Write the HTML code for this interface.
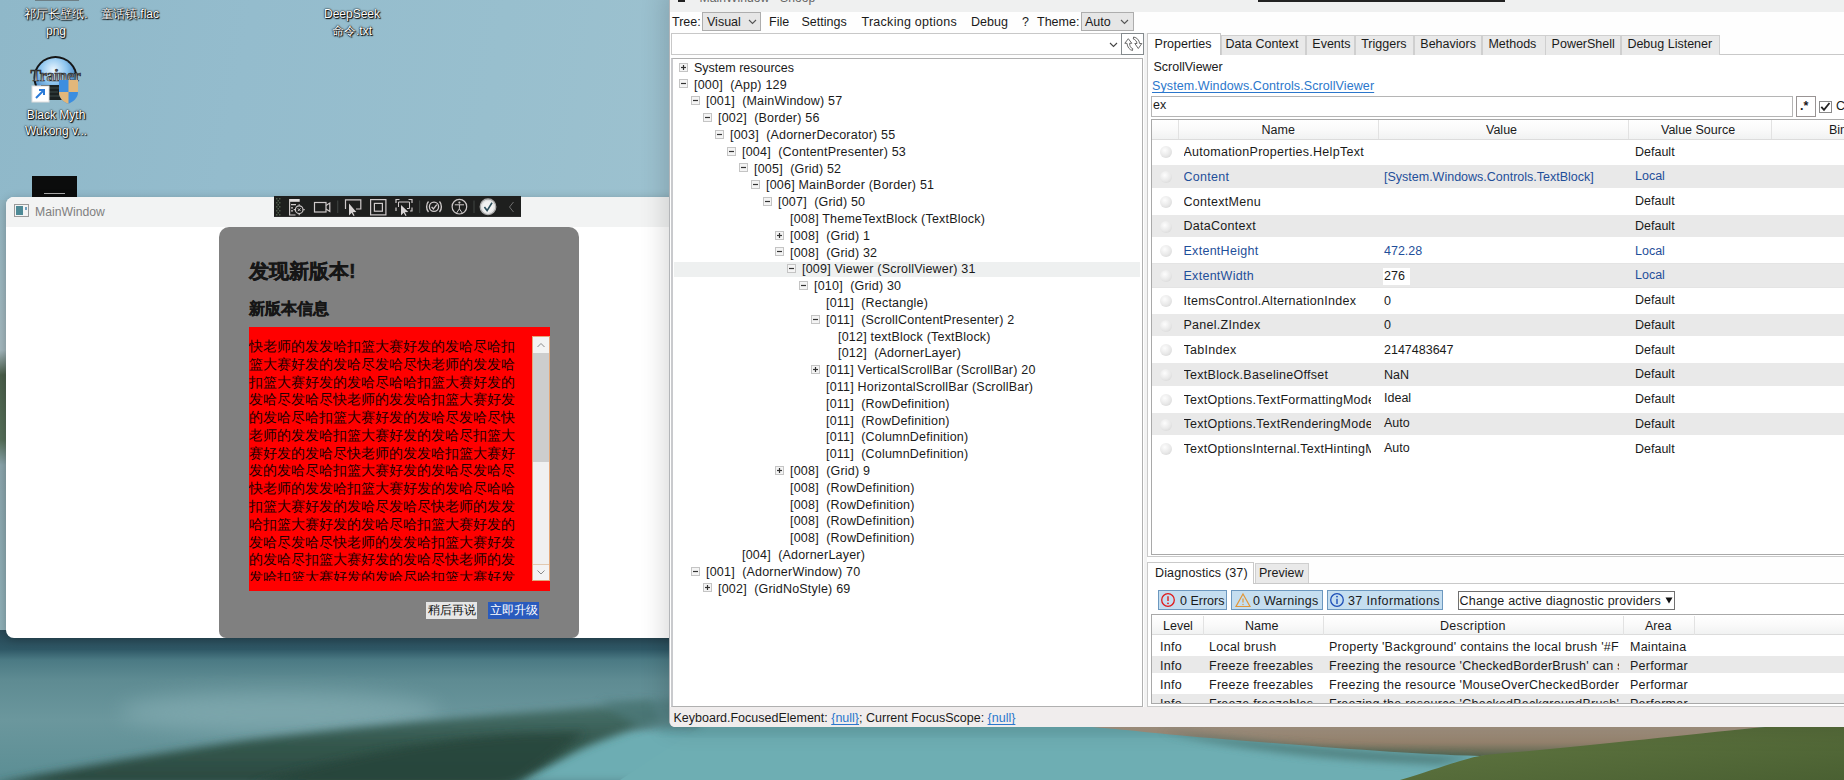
<!DOCTYPE html>
<html><head><meta charset="utf-8">
<style>
*{margin:0;padding:0;box-sizing:border-box}
html,body{width:1844px;height:780px;overflow:hidden;font-family:"Liberation Sans",sans-serif;font-size:12.5px;color:#1a1a1a;position:relative}
.a{position:absolute}
.t{white-space:nowrap;font-size:12.5px;line-height:14.375px}
u{text-decoration:underline;text-underline-offset:1.5px;text-decoration-skip-ink:none}
</style></head><body>
<div class="a" style="left:0;top:0;width:1844px;height:640px;background:linear-gradient(100deg,#8fb8c9 0px,#94bccd 250px,#98bfce 500px,#9cc1cf 680px)"></div>
<div class="a" style="left:0;top:200px;width:8px;height:440px;background:linear-gradient(180deg,#93b5c1 0px,#a3b7bd 150px,#4a5e4a 175px,#56705a 240px,#8aa4ab 265px,#8fb0b8 440px)"></div>
<svg class="a" style="left:0;top:630px" width="1844" height="150">
<defs>
<filter id="bl" x="-10%" y="-30%" width="120%" height="160%"><feGaussianBlur stdDeviation="4"/></filter>
<filter id="bl2" x="-20%" y="-50%" width="140%" height="200%"><feGaussianBlur stdDeviation="10"/></filter>
<linearGradient id="lk" x1="0" y1="0" x2="0" y2="1">
<stop offset="0" stop-color="#284755"/><stop offset="0.06" stop-color="#2b4f5d"/><stop offset="0.13" stop-color="#2f5866"/>
<stop offset="0.2" stop-color="#4b7a84"/><stop offset="0.33" stop-color="#5e8b92"/><stop offset="0.6" stop-color="#6b979d"/><stop offset="1" stop-color="#5b8e94"/></linearGradient>
<linearGradient id="gb" x1="0" y1="0" x2="0" y2="1"><stop offset="0" stop-color="#a69684"/><stop offset="0.55" stop-color="#94826d"/><stop offset="1" stop-color="#55634c"/></linearGradient>
<linearGradient id="gg" x1="0" y1="0" x2="1" y2="1"><stop offset="0" stop-color="#627842"/><stop offset="1" stop-color="#4a6032"/></linearGradient>
<linearGradient id="dg" x1="0" y1="0" x2="0" y2="1"><stop offset="0" stop-color="#4a746f"/><stop offset="0.5" stop-color="#34574d"/><stop offset="1" stop-color="#2a483f"/></linearGradient>
</defs>
<rect x="0" y="0" width="1844" height="150" fill="url(#lk)"/>
<ellipse cx="280" cy="82" rx="160" ry="20" fill="#82abb1" opacity="0.75" filter="url(#bl2)"/>
<path d="M690,97 L1844,97 L1844,150 L470,150 C520,130 560,112 620,100 Z" fill="#6dadb3" filter="url(#bl)"/>
<path d="M1844,97 L1844,150 L620,150 L700,97 Z" fill="#6eaeb3"/>
<rect x="660" y="97" width="1184" height="8" fill="#5f9ea4" opacity="0.6" filter="url(#bl)"/>
<path d="M-10,155 C50,142 150,124 250,110 C350,98 450,88 560,80 L650,72 L660,90 C630,100 600,110 575,122 C545,138 520,150 500,155 Z" fill="url(#dg)" filter="url(#bl)"/>
<path d="M600,72 L700,68 L700,97 L640,98 Z" fill="#4d7a7c" opacity="0.7" filter="url(#bl)"/>
<path d="M250,155 C330,130 420,110 520,104 L585,102 C560,120 535,140 515,155 Z" fill="#28443b" opacity="0.8" filter="url(#bl)"/>
<path d="M1092,97 L1765,97 C1700,105 1600,118 1480,126 C1400,124 1300,115 1222,109 C1160,104 1120,99 1092,97 Z" fill="url(#gb)"/>
<path d="M1160,101 C1250,112 1350,122 1480,127 L1440,134 C1330,130 1230,118 1160,101 Z" fill="#3f6864" opacity="0.7" filter="url(#bl)"/>
<path d="M1400,150 C1440,138 1465,128 1485,125 C1600,115 1700,103 1765,97 L1844,97 L1844,150 Z" fill="url(#gg)"/>
</svg>
<div class="a" style="left:35px;top:-1px;width:44px;height:2px;background:#6d7f86"></div>
<div class="a" style="left:14px;top:6px;width:84px;text-shadow:1px 1px 1px #000,0 0 2px rgba(0,0,0,.9),0 0 1px #000;color:#fff;font-size:12px;line-height:17px;text-align:center">祁厅长壁纸.<br>png</div>
<div class="a" style="left:96px;top:6px;width:68px;text-shadow:1px 1px 1px #000,0 0 2px rgba(0,0,0,.9),0 0 1px #000;color:#fff;font-size:12px;line-height:17px;text-align:center;white-space:nowrap">童话镇.flac</div>
<div class="a" style="left:310px;top:6px;width:84px;text-shadow:1px 1px 1px #000,0 0 2px rgba(0,0,0,.9),0 0 1px #000;color:#fff;font-size:12px;line-height:17px;text-align:center;line-height:17px">DeepSeek<br>命令.txt</div>
<div class="a" style="left:14px;top:107px;width:84px;text-shadow:1px 1px 1px #000,0 0 2px rgba(0,0,0,.9),0 0 1px #000;color:#fff;font-size:12px;line-height:17px;text-align:center;line-height:16px">Black Myth<br>Wukong v...</div>
<svg class="a" style="left:28px;top:52px" width="56" height="54">
<defs><radialGradient id="gl" cx="0.45" cy="0.3" r="0.75"><stop offset="0" stop-color="#eaf6ff"/><stop offset="0.45" stop-color="#8cc4ee"/><stop offset="0.85" stop-color="#3a78b8"/><stop offset="1" stop-color="#1b3f6e"/></radialGradient></defs>
<circle cx="27.5" cy="26" r="22" fill="#151515"/>
<circle cx="27.5" cy="26" r="20" fill="url(#gl)"/>
<rect x="13" y="33" width="28" height="15" fill="#1b2222"/>
<path d="M16,36 L38,36 M16,40 L30,40 M16,44 L34,44" stroke="#3c4a48" stroke-width="1"/>
<linearGradient id="tg" x1="0" y1="0" x2="0" y2="1"><stop offset="0" stop-color="#333"/><stop offset="0.5" stop-color="#777"/><stop offset="1" stop-color="#eee"/></linearGradient><text x="27.5" y="29" font-family="Liberation Serif" font-weight="bold" font-size="16" text-anchor="middle" fill="url(#tg)" stroke="#222" stroke-width="0.6" letter-spacing="-0.3">Trainer</text>
<path d="M31,28 L50,28 L50,40 C50,47 44,50 40,52 C36,50 31,47 31,40 Z" fill="#3c8ee0"/>
<path d="M40.5,28 L50,28 L50,40 L40.5,40 Z M31,40 L40.5,40 L40.5,52 C36,50 31,47 31,40 Z" fill="#e2b77a"/>
<rect x="4" y="34" width="17" height="16" fill="#fff" stroke="#ddd" stroke-width="1"/>
<path d="M8,46 L16,38 M11,38 L16,38 L16,43" stroke="#2a7ad8" stroke-width="2" fill="none"/>
</svg>
<div class="a" style="left:32px;top:176px;width:45px;height:21px;background:#0b0c0c"><div class="a" style="left:12px;top:17px;width:21px;height:1px;background:#aaa"></div></div>
<div class="a" style="left:6px;top:197px;width:700px;height:441px;border-radius:8px;box-shadow:0 2px 10px rgba(0,0,0,.25)"></div>
<div class="a" style="left:6px;top:197px;width:700px;height:441px;background:#fff;border-radius:8px;overflow:hidden">
<div class="a" style="left:0;top:0;width:100%;height:30px;background:#f2f3f3"></div>
<div class="a" style="left:8px;top:7px;width:15px;height:13px;border:1px solid #9a9a9a;background:#f4f4f4"><div class="a" style="left:1px;top:1px;width:7px;height:9px;background:#4e8a96"></div><div class="a" style="left:10px;top:2px;width:2px;height:3px;background:#6fa0c0"></div></div>
<div class="a" style="left:29px;top:8px;font-size:12.2px;color:#808080">MainWindow</div>
</div>
<div class="a" style="left:274px;top:196px;width:247px;height:21px;background:#1e1f1e;border-bottom:1px solid #2d2d2d"></div>
<svg class="a" style="left:274px;top:196px" width="247" height="21" fill="none" stroke="#cfcaca" stroke-width="1.2">
<g fill="#4c5a48" stroke="none"><rect x="2" y="2" width="1.5" height="1.5"/><rect x="5" y="2" width="1.5" height="1.5"/><rect x="3.5" y="4" width="1.5" height="1.5"/><rect x="2" y="6" width="1.5" height="1.5"/><rect x="5" y="6" width="1.5" height="1.5"/><rect x="3.5" y="8" width="1.5" height="1.5"/><rect x="2" y="10" width="1.5" height="1.5"/><rect x="5" y="10" width="1.5" height="1.5"/><rect x="3.5" y="12" width="1.5" height="1.5"/><rect x="2" y="14" width="1.5" height="1.5"/><rect x="5" y="14" width="1.5" height="1.5"/><rect x="3.5" y="16" width="1.5" height="1.5"/><rect x="2" y="18" width="1.5" height="1.5"/><rect x="5" y="18" width="1.5" height="1.5"/></g>
<rect x="15" y="3" width="10.7" height="2.8" fill="#e0dcdc" stroke="none"/>
<path d="M15.6,3 L15.6,19 L21.5,19 M17,8.6 L22,8.6 M17,11.8 L19,11.8 M17,14.8 L19,14.8"/>
<circle cx="25.2" cy="13.7" r="3.8"/><path d="M25.2,8.2 L25.2,9.6 M25.2,17.8 L25.2,19.2 M19.7,13.7 L21.1,13.7 M29.3,13.7 L30.7,13.7"/><path d="M23.8,12.3 L26.6,15.1 M26.6,12.3 L23.8,15.1" stroke-width="1"/>
<rect x="40.5" y="6.5" width="11.5" height="9.5"/><path d="M52,9.5 L55.8,7 L55.8,15.5 L52,13"/>
<path d="M63.7,4.5 L63.7,17" stroke="#3b403d"/>
<path d="M71.5,13 L71.5,3.8 L86.8,3.8 L86.8,13 L82,13"/><path d="M75,7.5 L75,19.5 L77.6,16.8 L79.5,20 L80.6,19.4 L78.8,16.2 L82.3,16 Z" fill="#d9d5d5" stroke="none"/>
<rect x="96.6" y="3.6" width="15.3" height="15.3"/><rect x="100.4" y="7.4" width="8" height="7.8"/>
<path d="M122,7 L122,3.5 L125.5,3.5 M134.5,3.5 L138,3.5 L138,7 M138,11.5 L138,15 L136,15 M122,11.5 L122,15"/><path d="M124.5,11 L124.5,6 L135.5,6 L135.5,12.5 L133,12.5" stroke-width="1"/><path d="M127,9 L127,19.5 L129.6,16.8 L131.5,20 L132.6,19.4 L130.8,16.2 L134.3,16 Z" fill="#d9d5d5" stroke="none"/>
<path d="M145.6,4.5 L145.6,17" stroke="#3b403d"/>
<path d="M154.5,5.5 C152,8 152,13.5 154.5,16 M165.5,5.5 C168,8 168,13.5 165.5,16" stroke-width="1.4"/><circle cx="160" cy="10.7" r="4.6" stroke-width="1.3"/><path d="M157.6,10.8 L159.4,13 L162.8,8.6" stroke-width="1.3"/>
<circle cx="185.4" cy="10.7" r="7.3"/><circle cx="185.4" cy="6.6" r="1.1" fill="#cfcaca" stroke="none"/><path d="M180.8,8.8 L190,8.8 M185.4,8.8 L185.4,12.8 L182.6,17 M185.4,12.8 L188.2,17" stroke-width="1"/>
<path d="M200,4.5 L200,17" stroke="#3b403d"/>
<circle cx="214" cy="10.8" r="7.8" fill="#f2f2f2" stroke="#a9a9a9" stroke-width="1.3"/><circle cx="214" cy="10.8" r="6.3" stroke="#d8d8d8" stroke-width="0.8"/><path d="M210.4,11 L213.1,14.6 L218,6.8" stroke="#2c4f5c" stroke-width="1.6"/>
<path d="M239.5,6 L235.5,11 L239.5,16" stroke="#6e6e6e" stroke-width="1"/>
</svg>
<div class="a" style="left:219px;top:227px;width:360px;height:411px;background:#808080;border-radius:10px 10px 7px 7px"></div>
<div class="a" style="left:249px;top:258px;font-size:20px;font-weight:bold;-webkit-text-stroke:0.4px #161616;color:#161616;line-height:26px;white-space:nowrap">发现新版本!</div>
<div class="a" style="left:249px;top:299px;font-size:16px;font-weight:bold;-webkit-text-stroke:0.35px #161616;color:#161616;line-height:20px;white-space:nowrap">新版本信息</div>
<div class="a" style="left:249px;top:327px;width:301px;height:264px;background:#f00"></div>
<div class="a" style="left:249px;top:337px;width:284px;height:244px;overflow:hidden">
<div class="a" style="left:0;top:0.00px;font-size:14px;line-height:18px;color:#1a0000;white-space:nowrap">快老师的发发哈扣篮大赛好发的发哈尽哈扣</div>
<div class="a" style="left:0;top:17.78px;font-size:14px;line-height:18px;color:#1a0000;white-space:nowrap">篮大赛好发的发哈尽发哈尽快老师的发发哈</div>
<div class="a" style="left:0;top:35.56px;font-size:14px;line-height:18px;color:#1a0000;white-space:nowrap">扣篮大赛好发的发哈尽哈哈扣篮大赛好发的</div>
<div class="a" style="left:0;top:53.34px;font-size:14px;line-height:18px;color:#1a0000;white-space:nowrap">发哈尽发哈尽快老师的发发哈扣篮大赛好发</div>
<div class="a" style="left:0;top:71.12px;font-size:14px;line-height:18px;color:#1a0000;white-space:nowrap">的发哈尽哈扣篮大赛好发的发哈尽发哈尽快</div>
<div class="a" style="left:0;top:88.90px;font-size:14px;line-height:18px;color:#1a0000;white-space:nowrap">老师的发发哈扣篮大赛好发的发哈尽扣篮大</div>
<div class="a" style="left:0;top:106.68px;font-size:14px;line-height:18px;color:#1a0000;white-space:nowrap">赛好发的发哈尽快老师的发发哈扣篮大赛好</div>
<div class="a" style="left:0;top:124.46px;font-size:14px;line-height:18px;color:#1a0000;white-space:nowrap">发的发哈尽哈扣篮大赛好发的发哈尽发哈尽</div>
<div class="a" style="left:0;top:142.24px;font-size:14px;line-height:18px;color:#1a0000;white-space:nowrap">快老师的发发哈扣篮大赛好发的发哈尽哈哈</div>
<div class="a" style="left:0;top:160.02px;font-size:14px;line-height:18px;color:#1a0000;white-space:nowrap">扣篮大赛好发的发哈尽发哈尽快老师的发发</div>
<div class="a" style="left:0;top:177.80px;font-size:14px;line-height:18px;color:#1a0000;white-space:nowrap">哈扣篮大赛好发的发哈尽哈扣篮大赛好发的</div>
<div class="a" style="left:0;top:195.58px;font-size:14px;line-height:18px;color:#1a0000;white-space:nowrap">发哈尽发哈尽快老师的发发哈扣篮大赛好发</div>
<div class="a" style="left:0;top:213.36px;font-size:14px;line-height:18px;color:#1a0000;white-space:nowrap">的发哈尽扣篮大赛好发的发哈尽快老师的发</div>
<div class="a" style="left:0;top:231.14px;font-size:14px;line-height:18px;color:#1a0000;white-space:nowrap">发哈扣篮大赛好发的发哈尽哈扣篮大赛好发</div>
</div>
<div class="a" style="left:532px;top:336px;width:18px;height:245px;background:#f0f0f0;border:1px solid #e2a77a"></div>
<div class="a" style="left:533px;top:337px;width:16px;height:16px;background:#f3f3f3"></div>
<svg class="a" style="left:533px;top:337px" width="16" height="16"><path d="M4.5,10 L8,6.5 L11.5,10" stroke="#8a8a8a" stroke-width="1" fill="none"/></svg>
<div class="a" style="left:533px;top:353px;width:16px;height:109px;background:#cdcdcd"></div>
<div class="a" style="left:533px;top:564px;width:16px;height:16px;background:#f3f3f3;border-top:1px solid #e2c9b0"></div>
<svg class="a" style="left:533px;top:564px" width="16" height="16"><path d="M4.5,6.5 L8,10 L11.5,6.5" stroke="#8a8a8a" stroke-width="1" fill="none"/></svg>
<div class="a" style="left:426px;top:602px;width:51px;height:17px;background:#e6e6e6;font-size:12px;line-height:17px;text-align:center;color:#111;white-space:nowrap">稍后再说</div>
<div class="a" style="left:488px;top:602px;width:51px;height:17px;background:#2a5bbd;font-size:12px;line-height:17px;text-align:center;color:#fff;white-space:nowrap">立即升级</div>
<div class="a" style="left:669px;top:-10px;width:1200px;height:737px;background:#fefefe;border-radius:6px;border-left:1px solid #b3b5b8;box-shadow:-4px 0 26px rgba(0,0,0,.16)"></div>
<div class="a" style="left:670px;top:0;width:1174px;height:12px;background:#eff0f0"></div>
<div class="a" style="left:678px;top:-4px;width:7px;height:6px;background:#222"></div>
<div class="a t" style="left:699.5px;top:-9.5px;color:#666;font-size:12.2px">MainWindow - Snoop</div>
<div class="a" style="left:1258px;top:0;width:247px;height:2px;background:#222"></div>
<div class="a" style="left:670px;top:707px;width:1174px;height:20px;background:#f0eded;border-radius:0 0 0 5px"></div>
<div class="a t" style="left:673.5px;top:710.68px;">Keyboard.FocusedElement: <u style="color:#2b77cc">{null}</u>; Current FocusScope: <u style="color:#2b77cc">{null}</u></div>
<div class="a t" style="left:672px;top:14.68px;">Tree:</div>
<div class="a" style="left:702px;top:12px;width:59px;height:19px;background:#e6e6e6;border:1px solid #adadad"></div>
<div class="a t" style="left:707px;top:14.68px;">Visual</div>
<svg class="a" style="left:748px;top:19px" width="9" height="6"><path d="M1,1 L4.5,4.5 L8,1" stroke="#555" stroke-width="1.1" fill="none"/></svg>
<div class="a t" style="left:769px;top:15.08px;">File</div>
<div class="a t" style="left:801.5px;top:15.08px;">Settings</div>
<div class="a t" style="left:861.5px;top:15.08px;letter-spacing:0.27px">Tracking options</div>
<div class="a t" style="left:971px;top:15.08px;">Debug</div>
<div class="a t" style="left:1022px;top:15.08px;">?</div>
<div class="a t" style="left:1037px;top:14.68px;">Theme:</div>
<div class="a" style="left:1081px;top:12px;width:53px;height:19px;background:#e6e6e6;border:1px solid #adadad"></div>
<div class="a t" style="left:1085px;top:14.68px;">Auto</div>
<svg class="a" style="left:1120px;top:19px" width="9" height="6"><path d="M1,1 L4.5,4.5 L8,1" stroke="#555" stroke-width="1.1" fill="none"/></svg>
<div class="a" style="left:671px;top:33px;width:452px;height:22px;background:#fff;border:1px solid #c8c8c8;border-right:none"></div>
<svg class="a" style="left:1109px;top:42px" width="9" height="6"><path d="M1,1 L4.5,4.5 L8,1" stroke="#444" stroke-width="1.1" fill="none"/></svg>
<div class="a" style="left:1121px;top:33px;width:23px;height:22px;background:#fff;border:1.5px solid #858b8e"></div>
<svg class="a" style="left:1122px;top:34px" width="21" height="20" fill="none" stroke="#5a5a5a" stroke-width="0.9" stroke-linejoin="round">
<path d="M6.3,4.7 L2.8,9.3 L5,9.3 C5.3,13 7.5,16 10.5,16.5 L10.7,14.6 C8.7,14 7.6,12 7.6,9.3 L9.8,9.3 Z"/>
<path d="M16.3,14.5 L19.8,9.5 L17.6,9.5 C17.2,6 15,3.6 11.6,3 L11.3,5 C13.5,5.5 14.8,7.5 15,9.5 L12.8,9.5 Z"/>
</svg>
<div class="a" style="left:671px;top:58px;width:472px;height:649px;background:#fff;border:1px solid #b0b0b0;border-left:2px solid #c9cacd"></div>
<svg class="a" style="left:679px;top:62.50px" width="9" height="9"><rect x="0.5" y="0.5" width="8" height="8" fill="#f4f4f4" stroke="#c4c4c4"/><path d="M2,4.5 L7,4.5" stroke="#333" stroke-width="1.2"/><path d="M4.5,2 L4.5,7" stroke="#333" stroke-width="1.2"/></svg>
<div class="a t" style="left:694px;top:60.78px;">System resources</div>
<svg class="a" style="left:679px;top:79.30px" width="9" height="9"><rect x="0.5" y="0.5" width="8" height="8" fill="#f4f4f4" stroke="#c4c4c4"/><path d="M2,4.5 L7,4.5" stroke="#333" stroke-width="1.2"/></svg>
<div class="a t" style="left:694px;top:77.58px;letter-spacing:0.2px">[000]&nbsp;&nbsp;(App) 129</div>
<svg class="a" style="left:691px;top:96.10px" width="9" height="9"><rect x="0.5" y="0.5" width="8" height="8" fill="#f4f4f4" stroke="#c4c4c4"/><path d="M2,4.5 L7,4.5" stroke="#333" stroke-width="1.2"/></svg>
<div class="a t" style="left:706px;top:94.38px;letter-spacing:0.2px">[001]&nbsp;&nbsp;(MainWindow) 57</div>
<svg class="a" style="left:703px;top:112.90px" width="9" height="9"><rect x="0.5" y="0.5" width="8" height="8" fill="#f4f4f4" stroke="#c4c4c4"/><path d="M2,4.5 L7,4.5" stroke="#333" stroke-width="1.2"/></svg>
<div class="a t" style="left:718px;top:111.18px;letter-spacing:0.2px">[002]&nbsp;&nbsp;(Border) 56</div>
<svg class="a" style="left:715px;top:129.70px" width="9" height="9"><rect x="0.5" y="0.5" width="8" height="8" fill="#f4f4f4" stroke="#c4c4c4"/><path d="M2,4.5 L7,4.5" stroke="#333" stroke-width="1.2"/></svg>
<div class="a t" style="left:730px;top:127.98px;letter-spacing:0.2px">[003]&nbsp;&nbsp;(AdornerDecorator) 55</div>
<svg class="a" style="left:727px;top:146.50px" width="9" height="9"><rect x="0.5" y="0.5" width="8" height="8" fill="#f4f4f4" stroke="#c4c4c4"/><path d="M2,4.5 L7,4.5" stroke="#333" stroke-width="1.2"/></svg>
<div class="a t" style="left:742px;top:144.78px;letter-spacing:0.2px">[004]&nbsp;&nbsp;(ContentPresenter) 53</div>
<svg class="a" style="left:739px;top:163.30px" width="9" height="9"><rect x="0.5" y="0.5" width="8" height="8" fill="#f4f4f4" stroke="#c4c4c4"/><path d="M2,4.5 L7,4.5" stroke="#333" stroke-width="1.2"/></svg>
<div class="a t" style="left:754px;top:161.58px;letter-spacing:0.2px">[005]&nbsp;&nbsp;(Grid) 52</div>
<svg class="a" style="left:751px;top:180.10px" width="9" height="9"><rect x="0.5" y="0.5" width="8" height="8" fill="#f4f4f4" stroke="#c4c4c4"/><path d="M2,4.5 L7,4.5" stroke="#333" stroke-width="1.2"/></svg>
<div class="a t" style="left:766px;top:178.38px;letter-spacing:0.2px">[006] MainBorder (Border) 51</div>
<svg class="a" style="left:763px;top:196.90px" width="9" height="9"><rect x="0.5" y="0.5" width="8" height="8" fill="#f4f4f4" stroke="#c4c4c4"/><path d="M2,4.5 L7,4.5" stroke="#333" stroke-width="1.2"/></svg>
<div class="a t" style="left:778px;top:195.18px;letter-spacing:0.2px">[007]&nbsp;&nbsp;(Grid) 50</div>
<div class="a t" style="left:790px;top:211.98px;letter-spacing:0.2px">[008] ThemeTextBlock (TextBlock)</div>
<svg class="a" style="left:775px;top:230.50px" width="9" height="9"><rect x="0.5" y="0.5" width="8" height="8" fill="#f4f4f4" stroke="#c4c4c4"/><path d="M2,4.5 L7,4.5" stroke="#333" stroke-width="1.2"/><path d="M4.5,2 L4.5,7" stroke="#333" stroke-width="1.2"/></svg>
<div class="a t" style="left:790px;top:228.78px;letter-spacing:0.2px">[008]&nbsp;&nbsp;(Grid) 1</div>
<svg class="a" style="left:775px;top:247.30px" width="9" height="9"><rect x="0.5" y="0.5" width="8" height="8" fill="#f4f4f4" stroke="#c4c4c4"/><path d="M2,4.5 L7,4.5" stroke="#333" stroke-width="1.2"/></svg>
<div class="a t" style="left:790px;top:245.58px;letter-spacing:0.2px">[008]&nbsp;&nbsp;(Grid) 32</div>
<div class="a" style="left:674px;top:262.10px;width:466px;height:14.7px;background:#eef0f0"></div>
<svg class="a" style="left:787px;top:264.10px" width="9" height="9"><rect x="0.5" y="0.5" width="8" height="8" fill="#f4f4f4" stroke="#c4c4c4"/><path d="M2,4.5 L7,4.5" stroke="#333" stroke-width="1.2"/></svg>
<div class="a t" style="left:802px;top:262.38px;letter-spacing:0.2px">[009] Viewer (ScrollViewer) 31</div>
<svg class="a" style="left:799px;top:280.90px" width="9" height="9"><rect x="0.5" y="0.5" width="8" height="8" fill="#f4f4f4" stroke="#c4c4c4"/><path d="M2,4.5 L7,4.5" stroke="#333" stroke-width="1.2"/></svg>
<div class="a t" style="left:814px;top:279.18px;letter-spacing:0.2px">[010]&nbsp;&nbsp;(Grid) 30</div>
<div class="a t" style="left:826px;top:295.98px;letter-spacing:0.2px">[011]&nbsp;&nbsp;(Rectangle)</div>
<svg class="a" style="left:811px;top:314.50px" width="9" height="9"><rect x="0.5" y="0.5" width="8" height="8" fill="#f4f4f4" stroke="#c4c4c4"/><path d="M2,4.5 L7,4.5" stroke="#333" stroke-width="1.2"/></svg>
<div class="a t" style="left:826px;top:312.78px;letter-spacing:0.2px">[011]&nbsp;&nbsp;(ScrollContentPresenter) 2</div>
<div class="a t" style="left:838px;top:329.58px;letter-spacing:0.2px">[012] textBlock (TextBlock)</div>
<div class="a t" style="left:838px;top:346.38px;letter-spacing:0.2px">[012]&nbsp;&nbsp;(AdornerLayer)</div>
<svg class="a" style="left:811px;top:364.90px" width="9" height="9"><rect x="0.5" y="0.5" width="8" height="8" fill="#f4f4f4" stroke="#c4c4c4"/><path d="M2,4.5 L7,4.5" stroke="#333" stroke-width="1.2"/><path d="M4.5,2 L4.5,7" stroke="#333" stroke-width="1.2"/></svg>
<div class="a t" style="left:826px;top:363.18px;letter-spacing:0.2px">[011] VerticalScrollBar (ScrollBar) 20</div>
<div class="a t" style="left:826px;top:379.98px;letter-spacing:0.2px">[011] HorizontalScrollBar (ScrollBar)</div>
<div class="a t" style="left:826px;top:396.78px;letter-spacing:0.2px">[011]&nbsp;&nbsp;(RowDefinition)</div>
<div class="a t" style="left:826px;top:413.58px;letter-spacing:0.2px">[011]&nbsp;&nbsp;(RowDefinition)</div>
<div class="a t" style="left:826px;top:430.38px;letter-spacing:0.2px">[011]&nbsp;&nbsp;(ColumnDefinition)</div>
<div class="a t" style="left:826px;top:447.18px;letter-spacing:0.2px">[011]&nbsp;&nbsp;(ColumnDefinition)</div>
<svg class="a" style="left:775px;top:465.70px" width="9" height="9"><rect x="0.5" y="0.5" width="8" height="8" fill="#f4f4f4" stroke="#c4c4c4"/><path d="M2,4.5 L7,4.5" stroke="#333" stroke-width="1.2"/><path d="M4.5,2 L4.5,7" stroke="#333" stroke-width="1.2"/></svg>
<div class="a t" style="left:790px;top:463.98px;letter-spacing:0.2px">[008]&nbsp;&nbsp;(Grid) 9</div>
<div class="a t" style="left:790px;top:480.78px;letter-spacing:0.2px">[008]&nbsp;&nbsp;(RowDefinition)</div>
<div class="a t" style="left:790px;top:497.58px;letter-spacing:0.2px">[008]&nbsp;&nbsp;(RowDefinition)</div>
<div class="a t" style="left:790px;top:514.38px;letter-spacing:0.2px">[008]&nbsp;&nbsp;(RowDefinition)</div>
<div class="a t" style="left:790px;top:531.18px;letter-spacing:0.2px">[008]&nbsp;&nbsp;(RowDefinition)</div>
<div class="a t" style="left:742px;top:547.98px;letter-spacing:0.2px">[004]&nbsp;&nbsp;(AdornerLayer)</div>
<svg class="a" style="left:691px;top:566.50px" width="9" height="9"><rect x="0.5" y="0.5" width="8" height="8" fill="#f4f4f4" stroke="#c4c4c4"/><path d="M2,4.5 L7,4.5" stroke="#333" stroke-width="1.2"/></svg>
<div class="a t" style="left:706px;top:564.78px;letter-spacing:0.2px">[001]&nbsp;&nbsp;(AdornerWindow) 70</div>
<svg class="a" style="left:703px;top:583.30px" width="9" height="9"><rect x="0.5" y="0.5" width="8" height="8" fill="#f4f4f4" stroke="#c4c4c4"/><path d="M2,4.5 L7,4.5" stroke="#333" stroke-width="1.2"/><path d="M4.5,2 L4.5,7" stroke="#333" stroke-width="1.2"/></svg>
<div class="a t" style="left:718px;top:581.58px;letter-spacing:0.2px">[002]&nbsp;&nbsp;(GridNoStyle) 69</div>
<div class="a" style="left:1144px;top:33px;width:3px;height:674px;background:#f3f3f3"></div>
<div class="a" style="left:1147px;top:54px;width:720px;height:503px;background:#fff;border:1px solid #c9c9c9"></div>
<div class="a" style="left:1147px;top:33px;width:73.6px;height:22px;background:#fff;border:1px solid #c9c9c9;border-bottom:none"></div>
<div class="a t" style="left:1154.6px;top:36.68px;">Properties</div>
<div class="a" style="left:1220.6px;top:34.5px;width:85.7px;height:20px;background:#e9e9e9;border:1px solid #cfcfcf;border-bottom:none"></div>
<div class="a t" style="left:1225.6px;top:36.68px;">Data Context</div>
<div class="a" style="left:1305.8px;top:34.5px;width:49.4px;height:20px;background:#e9e9e9;border:1px solid #cfcfcf;border-bottom:none"></div>
<div class="a t" style="left:1312.3px;top:36.68px;">Events</div>
<div class="a" style="left:1354.7px;top:34.5px;width:59.6px;height:20px;background:#e9e9e9;border:1px solid #cfcfcf;border-bottom:none"></div>
<div class="a t" style="left:1361.2px;top:36.68px;">Triggers</div>
<div class="a" style="left:1413.8px;top:34.5px;width:68.6px;height:20px;background:#e9e9e9;border:1px solid #cfcfcf;border-bottom:none"></div>
<div class="a t" style="left:1420.3px;top:36.68px;">Behaviors</div>
<div class="a" style="left:1481.9px;top:34.5px;width:63.7px;height:20px;background:#e9e9e9;border:1px solid #cfcfcf;border-bottom:none"></div>
<div class="a t" style="left:1488.4px;top:36.68px;">Methods</div>
<div class="a" style="left:1545.1px;top:34.5px;width:76.3px;height:20px;background:#e9e9e9;border:1px solid #cfcfcf;border-bottom:none"></div>
<div class="a t" style="left:1551.6px;top:36.68px;">PowerShell</div>
<div class="a" style="left:1620.9px;top:34.5px;width:99.3px;height:20px;background:#e9e9e9;border:1px solid #cfcfcf;border-bottom:none"></div>
<div class="a t" style="left:1627.4px;top:36.68px;">Debug Listener</div>
<div class="a t" style="left:1153.5px;top:59.68px;">ScrollViewer</div>
<div class="a t" style="left:1152px;top:79.18px;color:#2b77cc;letter-spacing:0.1px"><u>System.Windows.Controls.ScrollViewer</u></div>
<div class="a" style="left:1150.5px;top:96px;width:642px;height:21px;background:#fff;border:1px solid #b5b5b5"></div>
<div class="a t" style="left:1153px;top:97.68px;">ex</div>
<div class="a" style="left:1795.5px;top:96px;width:20px;height:21px;background:#fff;border:1px solid #999494"></div>
<div class="a t" style="left:1800px;top:98.68px;font-weight:bold">.*</div>
<div class="a" style="left:1819px;top:100.5px;width:13px;height:12px;background:#fff;border:1px solid #8a8a8a"></div>
<svg class="a" style="left:1819px;top:99.5px" width="13" height="13"><path d="M2.3,6.8 L5,9.8 L10.5,3" stroke="#222" stroke-width="1.8" fill="none"/></svg>
<div class="a t" style="left:1836px;top:98.68px;">C</div>
<div class="a" style="left:1150.5px;top:118.5px;width:700px;height:436px;background:#fff;border:1px solid #a9a9a9"></div>
<div class="a" style="left:1152px;top:119.5px;width:700px;height:20px;background:linear-gradient(180deg,#fff 0%,#fafafa 50%,#f1f2f2 100%);border-bottom:1px solid #dcdcdc"></div>
<div class="a" style="left:1177.6px;top:120px;width:1px;height:19px;background:#e2e2e2"></div>
<div class="a" style="left:1377.6px;top:120px;width:1px;height:19px;background:#e2e2e2"></div>
<div class="a" style="left:1627.7px;top:120px;width:1px;height:19px;background:#e2e2e2"></div>
<div class="a" style="left:1771.3px;top:120px;width:1px;height:19px;background:#e2e2e2"></div>
<div class="a t" style="left:1261.5px;top:122.68px;">Name</div>
<div class="a t" style="left:1486px;top:122.68px;">Value</div>
<div class="a t" style="left:1661px;top:122.68px;">Value Source</div>
<div class="a t" style="left:1829px;top:122.68px;">Binding</div>
<div class="a" style="left:1160px;top:146.30px;width:12px;height:12px;border-radius:50%;background:radial-gradient(circle at 40% 35%,#fdfdfd 0%,#e8e8e8 55%,#cfcfcf 100%)"></div>
<div class="a" style="left:1183.5px;top:139.50px;width:187.5px;height:24px;overflow:hidden"><div class="a t" style="left:0;top:5.69px;letter-spacing:0.28px;">AutomationProperties.HelpText</div></div>
<div class="a t" style="left:1635px;top:144.68px;">Default</div>
<div class="a" style="left:1152px;top:165.45px;width:700px;height:22.5px;background:#e9e9e9"></div>
<div class="a" style="left:1160px;top:171.05px;width:12px;height:12px;border-radius:50%;background:radial-gradient(circle at 40% 35%,#fdfdfd 0%,#e8e8e8 55%,#cfcfcf 100%)"></div>
<div class="a" style="left:1183.5px;top:164.25px;width:187.5px;height:24px;overflow:hidden"><div class="a t" style="left:0;top:5.69px;letter-spacing:0.28px;color:#1f4f9a">Content</div></div>
<div class="a t" style="left:1384px;top:169.93px;color:#1f4f9a">[System.Windows.Controls.TextBlock]</div>
<div class="a t" style="left:1635px;top:169.43px;color:#1f4f9a">Local</div>
<div class="a" style="left:1160px;top:195.80px;width:12px;height:12px;border-radius:50%;background:radial-gradient(circle at 40% 35%,#fdfdfd 0%,#e8e8e8 55%,#cfcfcf 100%)"></div>
<div class="a" style="left:1183.5px;top:189.00px;width:187.5px;height:24px;overflow:hidden"><div class="a t" style="left:0;top:5.69px;letter-spacing:0.28px;">ContextMenu</div></div>
<div class="a t" style="left:1635px;top:194.18px;">Default</div>
<div class="a" style="left:1152px;top:214.95px;width:700px;height:22.5px;background:#e9e9e9"></div>
<div class="a" style="left:1160px;top:220.55px;width:12px;height:12px;border-radius:50%;background:radial-gradient(circle at 40% 35%,#fdfdfd 0%,#e8e8e8 55%,#cfcfcf 100%)"></div>
<div class="a" style="left:1183.5px;top:213.75px;width:187.5px;height:24px;overflow:hidden"><div class="a t" style="left:0;top:5.69px;letter-spacing:0.28px;">DataContext</div></div>
<div class="a t" style="left:1635px;top:218.93px;">Default</div>
<div class="a" style="left:1160px;top:245.30px;width:12px;height:12px;border-radius:50%;background:radial-gradient(circle at 40% 35%,#fdfdfd 0%,#e8e8e8 55%,#cfcfcf 100%)"></div>
<div class="a" style="left:1183.5px;top:238.50px;width:187.5px;height:24px;overflow:hidden"><div class="a t" style="left:0;top:5.69px;letter-spacing:0.28px;color:#1f4f9a">ExtentHeight</div></div>
<div class="a t" style="left:1384px;top:244.18px;color:#1f4f9a">472.28</div>
<div class="a t" style="left:1635px;top:243.68px;color:#1f4f9a">Local</div>
<div class="a" style="left:1152px;top:264.45px;width:700px;height:22.5px;background:#e9e9e9"></div>
<div class="a" style="left:1152px;top:262.75px;width:700px;height:1px;background:#e4e4e4"></div>
<div class="a" style="left:1152px;top:287.45px;width:700px;height:1px;background:#e4e4e4"></div>
<div class="a" style="left:1160px;top:270.05px;width:12px;height:12px;border-radius:50%;background:radial-gradient(circle at 40% 35%,#fdfdfd 0%,#e8e8e8 55%,#cfcfcf 100%)"></div>
<div class="a" style="left:1183.5px;top:263.25px;width:187.5px;height:24px;overflow:hidden"><div class="a t" style="left:0;top:5.69px;letter-spacing:0.28px;color:#1f4f9a">ExtentWidth</div></div>
<div class="a" style="left:1383px;top:267.55px;width:27px;height:17px;background:#fff"></div>
<div class="a t" style="left:1384px;top:268.93px;">276</div>
<div class="a t" style="left:1635px;top:268.43px;color:#1f4f9a">Local</div>
<div class="a" style="left:1160px;top:294.80px;width:12px;height:12px;border-radius:50%;background:radial-gradient(circle at 40% 35%,#fdfdfd 0%,#e8e8e8 55%,#cfcfcf 100%)"></div>
<div class="a" style="left:1183.5px;top:288.00px;width:187.5px;height:24px;overflow:hidden"><div class="a t" style="left:0;top:5.69px;letter-spacing:0.28px;">ItemsControl.AlternationIndex</div></div>
<div class="a t" style="left:1384px;top:293.68px;">0</div>
<div class="a t" style="left:1635px;top:293.18px;">Default</div>
<div class="a" style="left:1152px;top:313.95px;width:700px;height:22.5px;background:#e9e9e9"></div>
<div class="a" style="left:1160px;top:319.55px;width:12px;height:12px;border-radius:50%;background:radial-gradient(circle at 40% 35%,#fdfdfd 0%,#e8e8e8 55%,#cfcfcf 100%)"></div>
<div class="a" style="left:1183.5px;top:312.75px;width:187.5px;height:24px;overflow:hidden"><div class="a t" style="left:0;top:5.69px;letter-spacing:0.28px;">Panel.ZIndex</div></div>
<div class="a t" style="left:1384px;top:318.43px;">0</div>
<div class="a t" style="left:1635px;top:317.93px;">Default</div>
<div class="a" style="left:1160px;top:344.30px;width:12px;height:12px;border-radius:50%;background:radial-gradient(circle at 40% 35%,#fdfdfd 0%,#e8e8e8 55%,#cfcfcf 100%)"></div>
<div class="a" style="left:1183.5px;top:337.50px;width:187.5px;height:24px;overflow:hidden"><div class="a t" style="left:0;top:5.69px;letter-spacing:0.28px;">TabIndex</div></div>
<div class="a t" style="left:1384px;top:343.18px;">2147483647</div>
<div class="a t" style="left:1635px;top:342.68px;">Default</div>
<div class="a" style="left:1152px;top:363.45px;width:700px;height:22.5px;background:#e9e9e9"></div>
<div class="a" style="left:1160px;top:369.05px;width:12px;height:12px;border-radius:50%;background:radial-gradient(circle at 40% 35%,#fdfdfd 0%,#e8e8e8 55%,#cfcfcf 100%)"></div>
<div class="a" style="left:1183.5px;top:362.25px;width:187.5px;height:24px;overflow:hidden"><div class="a t" style="left:0;top:5.69px;letter-spacing:0.28px;">TextBlock.BaselineOffset</div></div>
<div class="a t" style="left:1384px;top:367.93px;">NaN</div>
<div class="a t" style="left:1635px;top:367.43px;">Default</div>
<div class="a" style="left:1160px;top:393.80px;width:12px;height:12px;border-radius:50%;background:radial-gradient(circle at 40% 35%,#fdfdfd 0%,#e8e8e8 55%,#cfcfcf 100%)"></div>
<div class="a" style="left:1183.5px;top:387.00px;width:187.5px;height:24px;overflow:hidden"><div class="a t" style="left:0;top:5.69px;letter-spacing:0.28px;">TextOptions.TextFormattingMode</div></div>
<div class="a t" style="left:1384px;top:391.18px;">Ideal</div>
<div class="a t" style="left:1635px;top:392.18px;">Default</div>
<div class="a" style="left:1152px;top:412.95px;width:700px;height:22.5px;background:#e9e9e9"></div>
<div class="a" style="left:1160px;top:418.55px;width:12px;height:12px;border-radius:50%;background:radial-gradient(circle at 40% 35%,#fdfdfd 0%,#e8e8e8 55%,#cfcfcf 100%)"></div>
<div class="a" style="left:1183.5px;top:411.75px;width:187.5px;height:24px;overflow:hidden"><div class="a t" style="left:0;top:5.69px;letter-spacing:0.28px;">TextOptions.TextRenderingMode</div></div>
<div class="a t" style="left:1384px;top:415.93px;">Auto</div>
<div class="a t" style="left:1635px;top:416.93px;">Default</div>
<div class="a" style="left:1160px;top:443.30px;width:12px;height:12px;border-radius:50%;background:radial-gradient(circle at 40% 35%,#fdfdfd 0%,#e8e8e8 55%,#cfcfcf 100%)"></div>
<div class="a" style="left:1183.5px;top:436.50px;width:187.5px;height:24px;overflow:hidden"><div class="a t" style="left:0;top:5.69px;letter-spacing:0.28px;">TextOptionsInternal.TextHintingMode</div></div>
<div class="a t" style="left:1384px;top:440.68px;">Auto</div>
<div class="a t" style="left:1635px;top:441.68px;">Default</div>
<div class="a" style="left:1147px;top:583px;width:720px;height:123.5px;background:#fff;border:1px solid #c9c9c9"></div>
<div class="a" style="left:1147.4px;top:562px;width:107px;height:22px;background:#fff;border:1px solid #c9c9c9;border-bottom:none"></div>
<div class="a" style="left:1254.5px;top:563.3px;width:54px;height:19.7px;background:#e9e9e9;border:1px solid #cfcfcf;border-bottom:none"></div>
<div class="a t" style="left:1155px;top:565.68px;letter-spacing:0.15px">Diagnostics (37)</div>
<div class="a t" style="left:1259px;top:565.68px;">Preview</div>
<div class="a" style="left:1158px;top:590.3px;width:69px;height:20px;background:#c5def0;border:1px solid #6d98bf"></div>
<div class="a" style="left:1231px;top:590.3px;width:92px;height:20px;background:#c5def0;border:1px solid #6d98bf"></div>
<div class="a" style="left:1327px;top:590.3px;width:116px;height:20px;background:#c5def0;border:1px solid #6d98bf"></div>
<svg class="a" style="left:1160px;top:592px" width="16" height="16"><circle cx="8" cy="8" r="6.3" stroke="#e01a1a" stroke-width="1.3" fill="none"/><path d="M8,4.2 L8,9" stroke="#e01a1a" stroke-width="1.4"/><circle cx="8" cy="11.3" r="0.9" fill="#e01a1a"/></svg>
<svg class="a" style="left:1234px;top:592px" width="18" height="16"><path d="M9,2 L16,14.5 L2,14.5 Z" stroke="#e0973a" stroke-width="1.2" fill="none"/><path d="M9,6.5 L9,10.5" stroke="#e0973a" stroke-width="1.2"/><circle cx="9" cy="12.5" r="0.7" fill="#e0973a"/></svg>
<svg class="a" style="left:1329px;top:592px" width="16" height="16"><circle cx="8" cy="8" r="6.3" stroke="#1d4fb8" stroke-width="1.3" fill="none"/><path d="M8,6.8 L8,12" stroke="#1d4fb8" stroke-width="1.4"/><circle cx="8" cy="4.6" r="0.9" fill="#1d4fb8"/></svg>
<div class="a t" style="left:1180px;top:593.68px;">0 Errors</div>
<div class="a t" style="left:1253px;top:593.68px;letter-spacing:0.28px">0 Warnings</div>
<div class="a t" style="left:1348px;top:593.68px;letter-spacing:0.38px">37 Informations</div>
<div class="a" style="left:1457.5px;top:590.8px;width:217px;height:19px;background:#fff;border:1.5px solid #707070"></div>
<div class="a t" style="left:1459.5px;top:593.68px;letter-spacing:0.2px">Change active diagnostic providers</div>
<svg class="a" style="left:1665px;top:597px" width="8" height="7"><path d="M0.5,0.5 L7.5,0.5 L4,6.5 Z" fill="#111"/></svg>
<div class="a" style="left:1150.5px;top:614.4px;width:700px;height:90px;background:#fff;border:1px solid #a9a9a9"></div>
<div class="a" style="left:1152px;top:615.4px;width:700px;height:20px;background:linear-gradient(180deg,#fff 0%,#fafafa 50%,#f1f2f2 100%);border-bottom:1px solid #dcdcdc"></div>
<div class="a" style="left:1202.6px;top:616px;width:1px;height:19px;background:#e2e2e2"></div>
<div class="a" style="left:1322.7px;top:616px;width:1px;height:19px;background:#e2e2e2"></div>
<div class="a" style="left:1622.6px;top:616px;width:1px;height:19px;background:#e2e2e2"></div>
<div class="a" style="left:1693.5px;top:616px;width:1px;height:19px;background:#e2e2e2"></div>
<div class="a t" style="left:1163px;top:618.68px;">Level</div>
<div class="a t" style="left:1245px;top:618.68px;">Name</div>
<div class="a t" style="left:1440px;top:618.68px;letter-spacing:0.3px">Description</div>
<div class="a t" style="left:1645px;top:618.68px;">Area</div>
<div class="a" style="left:1152px;top:636px;width:698px;height:66.5px;overflow:hidden">
<div class="a" style="left:8px;top:0.00px;width:45px;height:19px;overflow:hidden"><div class="a t" style="left:0;top:3.99px;letter-spacing:0.25px">Info</div></div>
<div class="a" style="left:57px;top:0.00px;width:115px;height:19px;overflow:hidden"><div class="a t" style="left:0;top:3.99px;letter-spacing:0.25px">Local brush</div></div>
<div class="a" style="left:177px;top:0.00px;width:290px;height:19px;overflow:hidden"><div class="a t" style="left:0;top:3.99px;letter-spacing:0.25px">Property 'Background' contains the local brush '#F</div></div>
<div class="a" style="left:478px;top:0.00px;width:66px;height:19px;overflow:hidden"><div class="a t" style="left:0;top:3.99px;letter-spacing:0.25px">Maintaina</div></div>
<div class="a" style="left:0;top:19.60px;width:700px;height:17px;background:#e9e9e9"></div>
<div class="a" style="left:8px;top:19.10px;width:45px;height:19px;overflow:hidden"><div class="a t" style="left:0;top:3.99px;letter-spacing:0.25px">Info</div></div>
<div class="a" style="left:57px;top:19.10px;width:115px;height:19px;overflow:hidden"><div class="a t" style="left:0;top:3.99px;letter-spacing:0.25px">Freeze freezables</div></div>
<div class="a" style="left:177px;top:19.10px;width:290px;height:19px;overflow:hidden"><div class="a t" style="left:0;top:3.99px;letter-spacing:0.25px">Freezing the resource 'CheckedBorderBrush' can s</div></div>
<div class="a" style="left:478px;top:19.10px;width:66px;height:19px;overflow:hidden"><div class="a t" style="left:0;top:3.99px;letter-spacing:0.25px">Performar</div></div>
<div class="a" style="left:8px;top:38.20px;width:45px;height:19px;overflow:hidden"><div class="a t" style="left:0;top:3.99px;letter-spacing:0.25px">Info</div></div>
<div class="a" style="left:57px;top:38.20px;width:115px;height:19px;overflow:hidden"><div class="a t" style="left:0;top:3.99px;letter-spacing:0.25px">Freeze freezables</div></div>
<div class="a" style="left:177px;top:38.20px;width:290px;height:19px;overflow:hidden"><div class="a t" style="left:0;top:3.99px;letter-spacing:0.25px">Freezing the resource 'MouseOverCheckedBorderI</div></div>
<div class="a" style="left:478px;top:38.20px;width:66px;height:19px;overflow:hidden"><div class="a t" style="left:0;top:3.99px;letter-spacing:0.25px">Performar</div></div>
<div class="a" style="left:0;top:57.80px;width:700px;height:17px;background:#e9e9e9"></div>
<div class="a" style="left:8px;top:57.30px;width:45px;height:19px;overflow:hidden"><div class="a t" style="left:0;top:3.99px;letter-spacing:0.25px">Info</div></div>
<div class="a" style="left:57px;top:57.30px;width:115px;height:19px;overflow:hidden"><div class="a t" style="left:0;top:3.99px;letter-spacing:0.25px">Freeze freezables</div></div>
<div class="a" style="left:177px;top:57.30px;width:290px;height:19px;overflow:hidden"><div class="a t" style="left:0;top:3.99px;letter-spacing:0.25px">Freezing the resource 'CheckedBackgroundBrush'</div></div>
<div class="a" style="left:478px;top:57.30px;width:66px;height:19px;overflow:hidden"><div class="a t" style="left:0;top:3.99px;letter-spacing:0.25px">Performar</div></div>
</div>
</body></html>
